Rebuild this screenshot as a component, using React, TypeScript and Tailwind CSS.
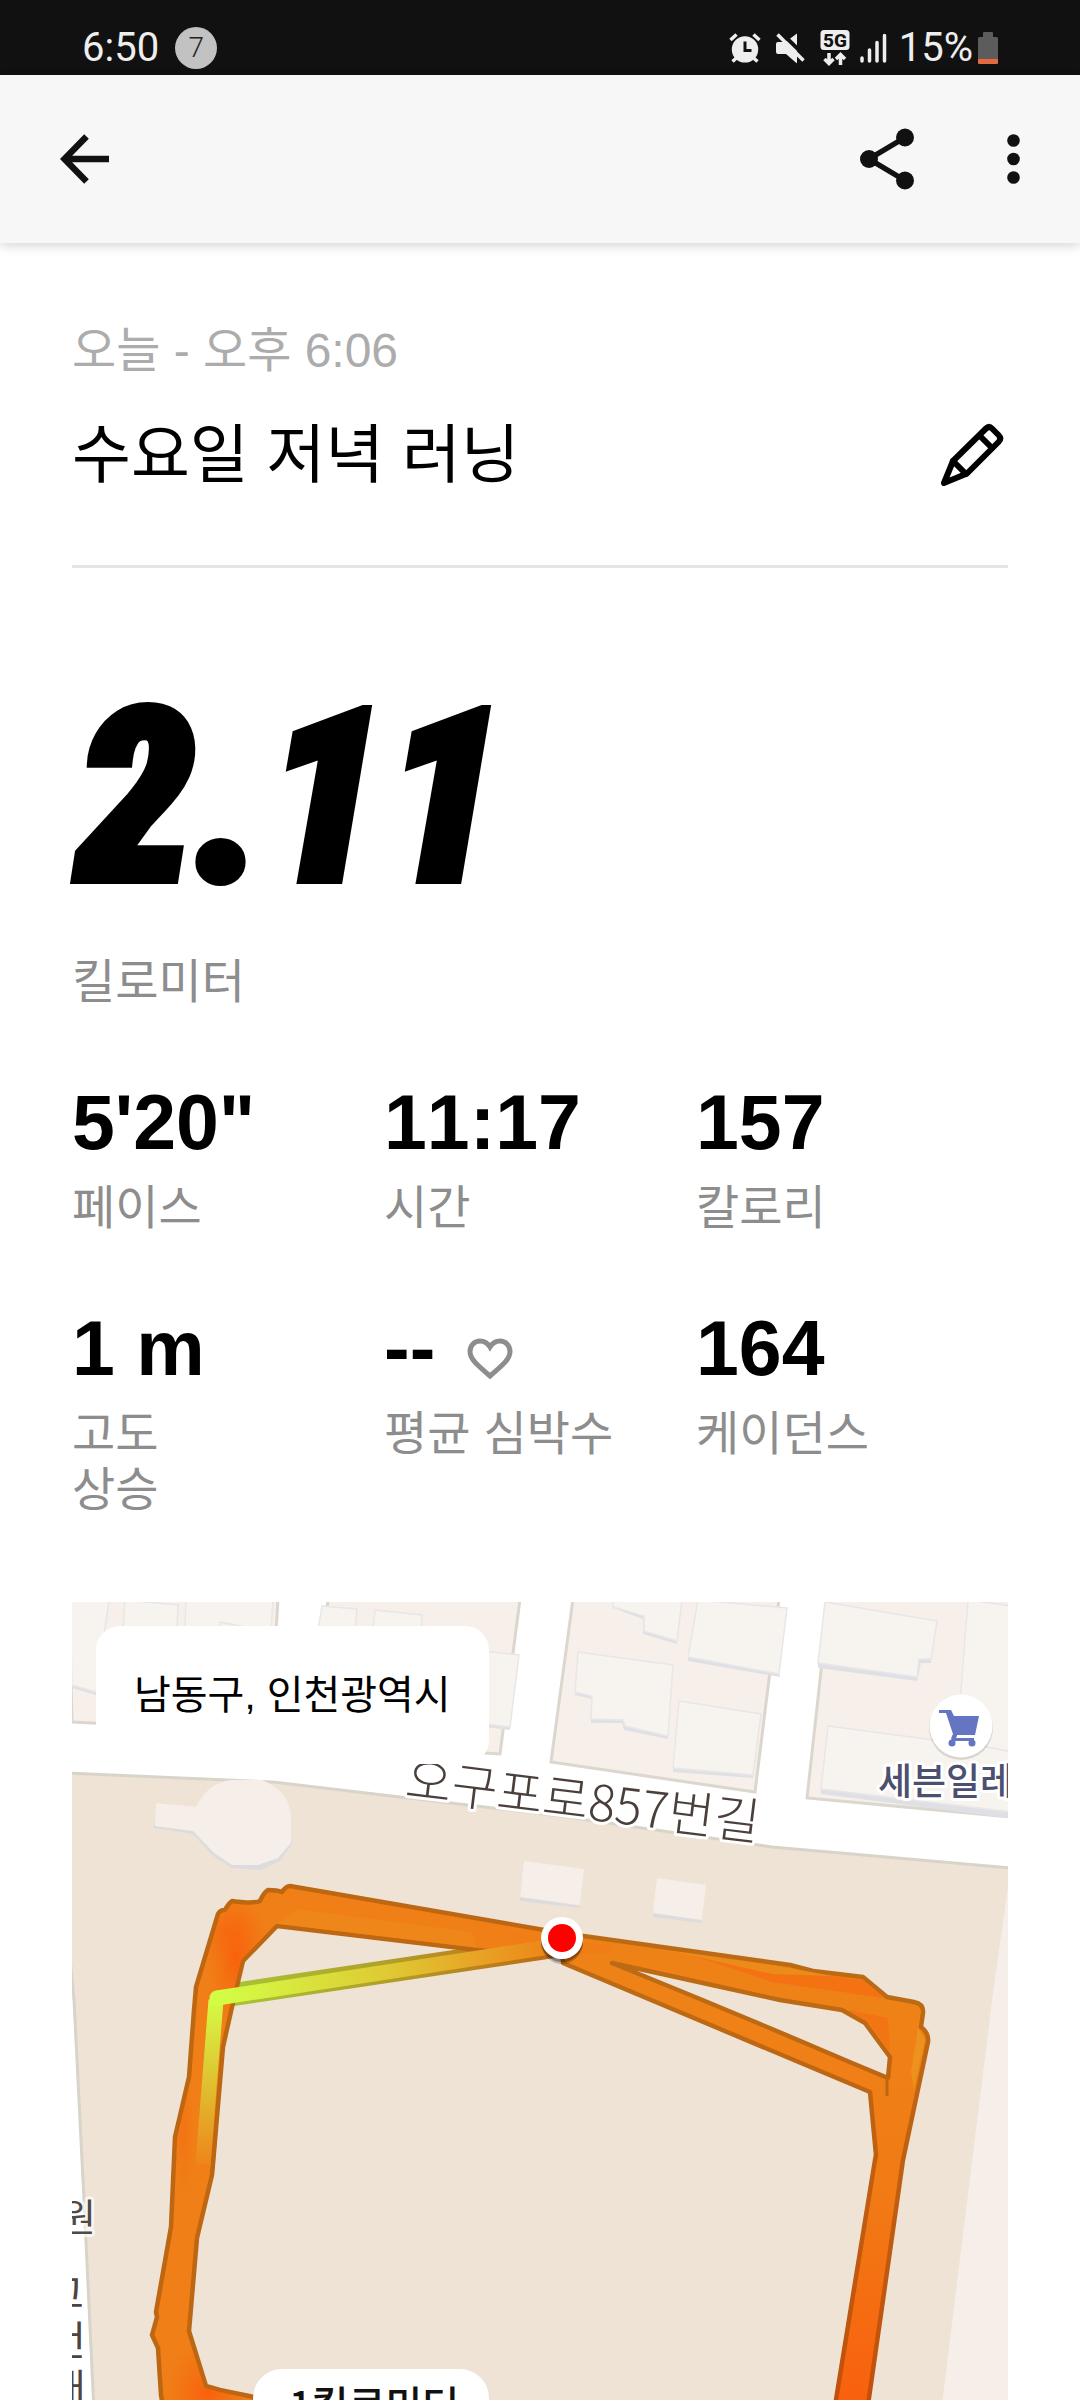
import type { ReactNode } from "react";

type Stat = {
  value: string;
  label: ReactNode;
  icon?: ReactNode;
};

const STATS: Stat[] = [
  { value: "5'20\"", label: "페이스" },
  { value: "11:17", label: "시간" },
  { value: "157", label: "칼로리" },
  {
    value: "1 m",
    label: (
      <>
        고도
        <br />
        상승
      </>
    ),
  },
  { value: "--", label: "평균 심박수", icon: <HeartIcon /> },
  { value: "164", label: "케이던스" },
];

function HeartIcon() {
  return (
    <svg width="46" height="42" viewBox="0 0 46 42" fill="none" stroke="#8d8d8d" strokeWidth="5">
      <path d="M23 38C10 27 3 21 3 13.500C3 7.500 7.500 3 13 3c4 0 7.500 2 10 6 2.500-4 6-6 10-6 5.500 0 10 4.500 10 10.500C43 21 36 27 23 38z" />
    </svg>
  );
}

function PencilIcon() {
  return (
    <svg
      width="64"
      height="64"
      viewBox="0 0 64 64"
      fill="none"
      stroke="#000"
      strokeWidth="6"
      strokeLinejoin="round"
      strokeLinecap="round"
    >
      <path d="M4 60 13 38 46 5.500q3-3 6 0l6.500 6.500q3.500 3.500 0 7L27 50.500z" />
      <path d="M13 38l13 13M40 13l12 12" />
    </svg>
  );
}

function StatusBar() {
  return (
    <div className="flex h-[75px] shrink-0 items-center justify-between bg-[#111] px-[82px] pt-5 font-['Roboto',sans-serif] text-[40px] leading-none text-[#eee]">
      <div className="flex items-center gap-4">
        <span>6:50</span>
        <span className="flex size-[42px] items-center justify-center rounded-full bg-[#c2c2c2] text-[28px] font-light text-[#222]">
          7
        </span>
      </div>

      <div className="flex items-center">
        {/* alarm */}
        <svg className="mr-[15px]" width="32" height="30" viewBox="0 0 32 30">
          <circle cx="16" cy="16.400" r="13.200" fill="#eee" />
          <path d="M1.500 7 7.500 1.500M30.500 7 24.500 1.500" stroke="#eee" strokeWidth="3.500" />
          <path d="M3.500 28.500 8 24.500M28.500 28.500 24 24.500" stroke="#eee" strokeWidth="3.500" />
          <path d="M16 8.500v9h6.500" fill="none" stroke="#111" strokeWidth="3" />
        </svg>

        {/* muted */}
        <svg className="mr-[15px]" width="29" height="30" viewBox="0 0 29 30">
          <path d="M2 9h7.500L21 .500V30.500L10 21H2q-2 0-2-2v-8q0-2 2-2z" fill="#eee" />
          <path d="M4.500-1 31 25" stroke="#111" strokeWidth="4" />
          <path d="M1.500 1.500 27.500 27.500" stroke="#eee" strokeWidth="3.500" />
        </svg>

        {/* network */}
        <svg className="mr-[10px]" width="30" height="36" viewBox="0 0 30 36">
          <rect width="29" height="20" x=".5" rx="3.500" fill="#eee" />
          <text
            x="15"
            y="17"
            textAnchor="middle"
            fontSize="19"
            fontWeight="800"
            fill="#111"
            fontFamily="Roboto, sans-serif"
          >
            5G
          </text>
          <path d="M9 23v10M4.500 29 9 33.500 13.500 29" fill="none" stroke="#eee" strokeWidth="3.500" />
          <path d="M20.500 35V25M16 29l4.500-4.500L25 29" fill="none" stroke="#eee" strokeWidth="3.500" />
        </svg>

        {/* signal */}
        <svg
          className="mr-3"
          width="27"
          height="30"
          viewBox="0 0 27 30"
          stroke="#eee"
          strokeWidth="3.500"
          strokeLinecap="round"
        >
          <path d="M2 25v3M9.500 17v11M17 9.500V28M24.500 2.500V28" />
        </svg>

        <span className="mr-[5px]">15%</span>

        {/* battery */}
        <svg width="20" height="32" viewBox="0 0 20 32">
          <rect x="5" width="10" height="7" rx="1" fill="#5c5c5c" />
          <rect y="5" width="20" height="27" rx="1.500" fill="#5c5c5c" />
          <path d="M0 27h20v3.500q0 1.500-1.500 1.500h-17Q0 32 0 30.500z" fill="#e5693f" />
        </svg>
      </div>
    </div>
  );
}

function AppBar() {
  return (
    <header className="relative flex h-42 shrink-0 items-center justify-between bg-[#f7f7f7] px-[60px] shadow-[0_3px_10px_rgba(0,0,0,0.16)]">
      <button type="button" aria-label="뒤로">
        <svg width="50" height="50" viewBox="0 0 50 50" fill="none" stroke="#111" strokeWidth="6.500">
          <path d="M26.500 2.500 4.500 25l22 22.500M5 25h44" />
        </svg>
      </button>

      <div className="flex items-center gap-[93px]">
        <button type="button" aria-label="공유">
          <svg width="54" height="62" viewBox="0 0 54 62" fill="#111">
            <path d="M45 9.500 9 31l36 21.500" fill="none" stroke="#111" strokeWidth="5.500" />
            <circle cx="45" cy="9.500" r="9" />
            <circle cx="9" cy="31" r="9" />
            <circle cx="45" cy="52.500" r="9" />
          </svg>
        </button>
        <button type="button" aria-label="더보기">
          <svg width="13" height="50" viewBox="0 0 13 50" fill="#111">
            <circle cx="6.500" cy="6.500" r="6.300" />
            <circle cx="6.500" cy="25" r="6.300" />
            <circle cx="6.500" cy="43.500" r="6.300" />
          </svg>
        </button>
      </div>
    </header>
  );
}

function MapGround() {
  return (
    <>
      {/* city blocks */}
      <g fill="#f7efe9" stroke="#dcd7ce" strokeWidth="3">
        <path d="M-3-3H206L198 130 0 120z" />
        <path d="M256-3H448L428 152 240 140z" />
        <path d="M501-3H707L683 190 479 160z" />
        <path d="M757-3H940V215L735 196z" />
      </g>

      {/* buildings: shaded copy first, roof on top */}
      <g fill="#dfe0e6">
        <path d="M0 0H37L24 93 0 86z" />
        <path d="M616 55 707 72 708 75 616 59zM746 61 845 75 847 57H859V61H849L845 79 746 66z" />
        <path d="M503 90 520 94V97L503 93zM519 117 551 118 553 124 596 134V137L552 128 550 121H519z" />
        <path d="M601 166 681 173V176L601 170zM749 187 936 210V216L749 192z" />
        <path d="M541 3 572 14V29L605 39V42L571 32V17L541 6zM404 121 438 125V128L404 124z" />
      </g>
      <g fill="#f7f4ef" stroke="#e8e6e6" strokeWidth="1.500">
        <path d="M-2-2H37L24 90 0 83z" />
        <path d="M53-2 106 3 105 26H51z" />
        <path d="M114-2H201L199 30 148 20 147 26H113z" />
        <path d="M250 4 285 7 283 28H246zM303 8 350 13 349 28H301z" />
        <path d="M411 49 447 53 438 125 404 121z" />
        <path d="M541-2H610L605 39 572 29V14L541 5z" />
        <path d="M626-2 715 6 707 72 616 55z" />
        <path d="M506 50 601 63 596 134 553 124 551 118 519 117 520 94 503 90z" />
        <path d="M607 99 689 112 681 173 601 166z" />
        <path d="M753 0 865 19 859 57H847L845 75 746 61z" />
        <path d="M896-2 940 4V150L885 140z" />
        <path d="M756 124 915 145 940 150V210L749 187z" />
      </g>

      {/* park */}
      <path
        d="M-4 171 201 180 345 197 488 214 700 245 780 252 940 266V810H22L12 598 2 398-4 335z"
        fill="#eee3d5"
        stroke="#d8d4ca"
        strokeWidth="3"
      />
      <path d="M936 284 920 398 870 802H936z" fill="#f6eee8" />

      <g fill="#dcdbde">
        <path d="M82 226 121 232 140 253 160 266 188 268 208 259 220 242V237L82 222z" />
        <path d="M448 295 508 304V306L448 299zM581 311 630 318V321L581 315z" />
      </g>
      <g fill="#f6eee9">
        <path d="M84 201 124 205Q136 180 160 178H190Q219 190 219 216V241L206 256 186 263H160L142 251 121 229 83 224z" />
        <path d="M452 259 512 267 508 303 448 295zM585 276 634 283 630 318 581 311z" />
      </g>
    </>
  );
}

function Route() {
  return (
    <>
      <defs>
        <linearGradient id="slowEast" gradientUnits="userSpaceOnUse" x1="150" y1="0" x2="480" y2="0">
          <stop offset="0" stopColor="#d3fd45" />
          <stop offset="0.500" stopColor="#deca34" />
          <stop offset="0.800" stopColor="#e9a024" />
          <stop offset="1" stopColor="#ee8418" />
        </linearGradient>
        <linearGradient id="slowEastEdge" gradientUnits="userSpaceOnUse" x1="150" y1="0" x2="480" y2="0">
          <stop offset="0" stopColor="#a8c636" />
          <stop offset="0.500" stopColor="#b19f28" />
          <stop offset="1" stopColor="#c06a14" />
        </linearGradient>
        <linearGradient id="slowSouth" gradientUnits="userSpaceOnUse" x1="0" y1="396" x2="0" y2="570">
          <stop offset="0" stopColor="#d3fd45" />
          <stop offset="0.550" stopColor="#e1b92e" />
          <stop offset="1" stopColor="#ef8018" />
        </linearGradient>
        <linearGradient id="slowSouthEdge" gradientUnits="userSpaceOnUse" x1="0" y1="396" x2="0" y2="570">
          <stop offset="0" stopColor="#a8c636" />
          <stop offset="0.600" stopColor="#b28f24" />
          <stop offset="1" stopColor="#c06a14" />
        </linearGradient>
        <linearGradient id="eastSide" gradientUnits="userSpaceOnUse" x1="0" y1="400" x2="0" y2="800">
          <stop offset="0" stopColor="#ef8217" />
          <stop offset="0.500" stopColor="#f17a15" />
          <stop offset="1" stopColor="#f9600d" />
        </linearGradient>
        <linearGradient id="eastEdge" gradientUnits="userSpaceOnUse" x1="0" y1="400" x2="0" y2="800">
          <stop offset="0" stopColor="#bd6a14" />
          <stop offset="1" stopColor="#c2500c" />
        </linearGradient>
        <radialGradient id="fast">
          <stop offset="0" stopColor="#fb5c0b" stopOpacity="0.900" />
          <stop offset="1" stopColor="#f56c10" stopOpacity="0" />
        </radialGradient>
        <clipPath id="westShape">
          <path d="M218 286 490 333V346L405 346 204 322 169 358 158 405 149 445 138 573 123 636 115 729 132 786 180 797V810H93L91 793 88 746 82 733 87 710 101 625 105 535 119 475 126 385 148 313 160 302 188 302z" />
        </clipPath>
      </defs>

      {/* slow section outline */}
      <g fill="none" strokeWidth="23" strokeLinejoin="round">
        <path d="M145 395 486 344" stroke="url(#slowEastEdge)" />
        <path d="M144 398 131 567" stroke="url(#slowSouthEdge)" />
      </g>

      {/* west side */}
      <path
        d="M490 331 218 284Q214 284 210 290 205 288 196 288 192 290 188 299 181 302 160 299 156 302 153 308 148 308 146 312L124 385 122 408 117 475 103 535 99 625 84 710 85 715 80 733 86 746 89 793 92 810H182V795L148 788 134 784 117 729 125 636 140 573 151 445 160 405 171 359 205 324 405 348 425 350 490 343z"
        fill="#f07f17"
        stroke="#be6713"
        strokeWidth="4.500"
        strokeLinejoin="round"
      />
      <g clipPath="url(#westShape)">
        <ellipse cx="164" cy="356" rx="30" ry="66" fill="url(#fast)" />
        <ellipse cx="156" cy="330" rx="44" ry="36" fill="url(#fast)" opacity="0.500" />
        <ellipse cx="136" cy="790" rx="46" ry="52" fill="url(#fast)" />
        <ellipse cx="112" cy="530" rx="12" ry="70" fill="url(#fast)" opacity="0.400" />
        <path d="M204 322 225 307 400 330 405 346z" fill="#ed8a1a" opacity="0.600" />
      </g>

      {/* east side with the strip of park left between the two passes */}
      <path
        fillRule="evenodd"
        d="M490 331 718 363 741 369 791 375 815 395 842 400Q852 402 851 411L849 425Q857 431 856 440L831 558 795 810H762L803 558 804 553 798 490 491 361zM540 361 628 397 700 427 780 461 816 476 818 455 793 421 770 408 708 398 640 383z"
        fill="url(#eastSide)"
        stroke="url(#eastEdge)"
        strokeWidth="4.500"
        strokeLinejoin="round"
      />
      <path d="M622 354 718 366 741 372 790 378 812 396 700 380z" fill="#f66a10" opacity="0.650" />
      <path d="M600 349 718 366 760 374 700 372z" fill="#eb8c1a" />
      <path d="M846 426 853 438 842 486 839 470z" fill="#ec921d" />
      <path d="M776 408 816 416 818 449 796 420z" fill="#f27413" />
      <path d="M815 474 815 494" stroke="#be6713" strokeWidth="3" />

      {/* joint under the start marker */}
      <path d="M440 331 485 337 540 344 540 352 491 352 440 347z" fill="#f07d16" />

      {/* slow section */}
      <g fill="none" strokeWidth="15" strokeLinejoin="round" strokeLinecap="round">
        <path d="M144 398 131 562" stroke="url(#slowSouth)" strokeLinecap="butt" />
        <path d="M145 396 478 345" stroke="url(#slowEast)" />
      </g>
    </>
  );
}

function RunMap() {
  return (
    <section className="relative mt-21 overflow-hidden bg-white">
      <svg
        className="block w-full"
        viewBox="0 0 936 798"
        fontFamily="'Noto Sans CJK KR', sans-serif"
        role="img"
        aria-label="러닝 경로"
      >
        <MapGround />

        <g stroke="#fff" strokeLinejoin="round" paintOrder="stroke">
          <text
            x="332"
            y="195"
            fontSize="50"
            fontWeight="300"
            fill="#4a3f3b"
            strokeWidth="6"
            transform="rotate(7 332 195)"
          >
            오구포로857번길
          </text>
          <text x="806" y="193" fontSize="37" fontWeight="500" fill="#4b4f70" strokeWidth="6">
            세븐일레
          </text>
          <text x="-11" y="629" fontSize="38" fill="#4d4a48" strokeWidth="6" strokeOpacity="0.700">
            원
          </text>
          <g fontSize="40" fill="#4d4441" strokeWidth="4">
            <text x="-25" y="706">고</text>
            <text x="-23" y="753">건</text>
            <text x="-23" y="801">래</text>
          </g>
        </g>

        {/* store pin */}
        <circle cx="889" cy="126" r="32" fill="#000" opacity="0.120" />
        <circle cx="889" cy="124" r="31.500" fill="#fff" />
        <g fill="#6475c4">
          <path d="M867 108h12l3 6h25l-4 19h-18v1l-1 2h18v3h-21q-3-1-1-5l1-2-7-21h-7z" />
          <circle cx="880" cy="141" r="3.500" />
          <circle cx="900" cy="141" r="3.500" />
        </g>

        <Route />

        {/* start marker */}
        <circle cx="490" cy="341" r="21" fill="#000" opacity="0.200" />
        <circle cx="490" cy="339" r="21" fill="#000" opacity="0.300" />
        <circle cx="490" cy="336" r="21" fill="#fff" />
        <circle cx="490" cy="336" r="14" fill="#fe0000" />

        {/* distance marker */}
        <rect x="181" y="767" width="236" height="76" rx="29" fill="#fff" />
        <text x="302" y="818" fontSize="40" fontWeight="500" fill="#111" textAnchor="middle">
          1킬로미터
        </text>
      </svg>

      <div className="absolute top-6 left-6 rounded-3xl bg-white px-[38px] py-10 text-[40px] leading-[58px] text-black">
        남동구, 인천광역시
      </div>
    </section>
  );
}

export default function App() {
  return (
    <div className="flex h-screen flex-col overflow-hidden bg-white font-['Liberation_Sans','Noto_Sans_CJK_KR',sans-serif]">
      <StatusBar />
      <AppBar />

      <main className="px-18 pt-20">
        <p className="text-[48px] leading-14 text-[#acacac]">오늘 - 오후 6:06</p>
        <div className="mt-10 flex items-center justify-between border-b-3 border-[#e5e5e5] pr-1 pb-[74px]">
          <h1 className="text-[64px] leading-18 text-black">수요일 저녁 러닝</h1>
          <button type="button" aria-label="이름 수정">
            <PencilIcon />
          </button>
        </div>

        <p className="mt-[130px] pl-1 font-['Roboto_Condensed','Roboto',sans-serif] text-[240px] leading-[200px] font-black text-black italic [-webkit-text-stroke:8px_black]">
          2.11
        </p>
        <p className="mt-14 text-[47px] leading-14 text-[#8d8d8d]">킬로미터</p>

        <dl className="mt-18 grid grid-cols-3 gap-y-18">
          {STATS.map((stat) => (
            <div key={stat.value} className="flex flex-col-reverse justify-end gap-[18px]">
              <dt className="text-[47px] leading-14 text-[#8d8d8d]">{stat.label}</dt>
              <dd className="flex items-end gap-8 text-[77px] leading-20 font-bold text-black [font-kerning:none]">
                {stat.value}
                {stat.icon && <span className="pb-2">{stat.icon}</span>}
              </dd>
            </div>
          ))}
        </dl>

        <RunMap />
      </main>
    </div>
  );
}
